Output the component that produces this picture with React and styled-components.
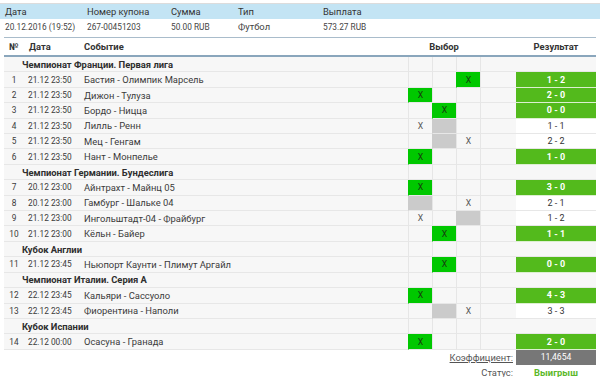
import React from 'react';
import styled, { createGlobalStyle } from 'styled-components';

const GlobalStyle = createGlobalStyle`
  body {
    margin: 0;
    background: #fff;
    font-family: Roboto, 'Liberation Sans', sans-serif;
    font-size: 9.4px;
    color: #333;
  }
`;

const Page = styled.div`
  width: 600px;
  padding-top: 3px;
`;

// цифры в исходнике заметно уже кириллицы
const Num = styled.span`
  font-size: 8.3px;
`;

// верхняя сводка по купону
const Summary = styled.div`
  display: grid;
  grid-template-columns: 82px 84px 67px 85px 1fr;
  padding-left: 5px;
  height: ${(p) => (p.$head ? '15px' : '16px')};
  line-height: ${(p) => (p.$head ? '15px' : '16px')};
  align-items: baseline;
  background: ${(p) => (p.$head ? '#c3e4f4' : '#fff')};
  border-top: ${(p) => (p.$head ? '1px solid #dcdcdc' : 'none')};
  color: ${(p) => (p.$head ? '#333' : '#444')};
  white-space: nowrap;
`;

const Details = styled.div`
  margin: 2px 4px 0;
  border-top: 1px solid #a9bccb;
`;

const COLS = '20px 56px 328px 24px 24px 24px 36px 80px';

const HeadRow = styled.div`
  display: grid;
  grid-template-columns: ${COLS};
  height: 17px;
  align-items: center;
  font-weight: 700;
  color: #333;
  border-bottom: 2px solid #8aa6bc;
`;

const HeadCell = styled.div`
  padding-left: ${(p) => p.$pad || 0}px;
  text-align: ${(p) => (p.$center ? 'center' : 'left')};
  grid-column: ${(p) => p.$span || 'auto'};
`;

const Row = styled.div`
  display: grid;
  grid-template-columns: ${COLS};
  height: 15.42px;
  background: #f7f7f7;
  white-space: nowrap;
`;

const Cell = styled.div`
  display: flex;
  align-items: center;
  justify-content: ${(p) => (p.$center ? 'center' : 'flex-start')};
  padding-left: ${(p) => p.$pad || 0}px;
  border-bottom: 1px solid #e7e7e7;
  color: #3a3a3a;
  font-size: ${(p) => (p.$num ? '8.3px' : 'inherit')};
`;

const LeagueCell = styled(Cell)`
  grid-column: 1 / 4;
  padding-left: 18px;
  font-weight: 700;
  color: #2e2e2e;
`;

const PICK_BG = { win: '#00c800', miss: '#cbcbcb', none: 'transparent' };

const Pick = styled(Cell)`
  justify-content: center;
  border-left: 1px solid ${(p) => (p.$kind === 'win' ? '#00c800' : p.$kind === 'miss' ? '#cbcbcb' : '#e6e6e6')};
  background: ${(p) => PICK_BG[p.$kind]};
  color: ${(p) => (p.$kind === 'win' ? '#183510' : '#555')};
  font-size: 8.6px;
`;

const Spacer = styled(Cell)`
  border-left: 1px solid #e6e6e6;
`;

const Result = styled(Cell)`
  justify-content: center;
  background: ${(p) => (p.$won ? '#53ba1c' : '#fff')};
  color: ${(p) => (p.$won ? '#fff' : '#333')};
  font-weight: ${(p) => (p.$won ? 700 : 400)};
  font-size: 9px;
  border-bottom-color: ${(p) => (p.$won ? '#dcefd0' : '#e7e7e7')};
`;

const Footer = styled.div`
  display: grid;
  grid-template-columns: 1fr 80px;
  height: 15px;
  align-items: center;
`;

const FootLabel = styled.span`
  justify-self: end;
  padding-right: 3px;
  text-decoration: underline;
  color: #555;
`;

const FootValue = styled.div`
  height: 100%;
  display: flex;
  align-items: center;
  justify-content: center;
  background: ${(p) => (p.$dark ? '#777' : 'transparent')};
  color: ${(p) => (p.$dark ? '#fff' : '#5cb82a')};
  font-weight: ${(p) => (p.$dark ? 400 : 700)};
  font-size: ${(p) => (p.$dark ? '8.6px' : 'inherit')};
`;

const leagues = [
  {
    name: 'Чемпионат Франции. Первая лига',
    games: [
      [1, '21.12 23:50', 'Бастия - Олимпик Марсель', ['none', 'none', 'win'], '1 - 2', true],
      [2, '21.12 23:50', 'Дижон - Тулуза', ['win', 'none', 'none'], '2 - 0', true],
      [3, '21.12 23:50', 'Бордо - Ницца', ['none', 'win', 'none'], '0 - 0', true],
      [4, '21.12 23:50', 'Лилль - Ренн', ['pick', 'miss', 'none'], '1 - 1', false],
      [5, '21.12 23:50', 'Мец - Генгам', ['none', 'miss', 'pick'], '2 - 2', false],
      [6, '21.12 23:50', 'Нант - Монпелье', ['win', 'none', 'none'], '1 - 0', true],
    ],
  },
  {
    name: 'Чемпионат Германии. Бундеслига',
    games: [
      [7, '20.12 23:00', 'Айнтрахт - Майнц 05', ['win', 'none', 'none'], '3 - 0', true],
      [8, '20.12 23:00', 'Гамбург - Шальке 04', ['miss', 'none', 'pick'], '2 - 1', false],
      [9, '21.12 23:00', 'Ингольштадт-04 - Фрайбург', ['pick', 'none', 'miss'], '1 - 2', false],
      [10, '21.12 23:00', 'Кёльн - Байер', ['none', 'win', 'none'], '1 - 1', true],
    ],
  },
  {
    name: 'Кубок Англии',
    games: [[11, '21.12 23:45', 'Ньюпорт Каунти - Плимут Аргайл', ['none', 'win', 'none'], '0 - 0', true]],
  },
  {
    name: 'Чемпионат Италии. Серия А',
    games: [
      [12, '22.12 23:45', 'Кальяри - Сассуоло', ['win', 'none', 'none'], '4 - 3', true],
      [13, '22.12 23:45', 'Фиорентина - Наполи', ['none', 'miss', 'pick'], '3 - 3', false],
    ],
  },
  {
    name: 'Кубок Испании',
    games: [[14, '22.12 00:00', 'Осасуна - Гранада', ['win', 'none', 'none'], '2 - 0', true]],
  },
];

function EmptyPicks() {
  return (
    <>
      <Pick $kind="none" />
      <Pick $kind="none" />
      <Pick $kind="none" />
      <Spacer />
      <Cell />
    </>
  );
}

export default function App() {
  return (
    <Page>
      <GlobalStyle />
      <Summary $head>
        <span>Дата</span>
        <span>Номер купона</span>
        <span>Сумма</span>
        <span>Тип</span>
        <span>Выплата</span>
      </Summary>
      <Summary>
        <Num>20.12.2016 (19:52)</Num>
        <Num>267-00451203</Num>
        <Num>50.00 RUB</Num>
        <span>Футбол</span>
        <Num>573.27 RUB</Num>
      </Summary>

      <Details>
        <HeadRow>
          <HeadCell $pad={5}>№</HeadCell>
          <HeadCell $pad={5}>Дата</HeadCell>
          <HeadCell $pad={4}>Событие</HeadCell>
          <HeadCell $center $span="4 / 7">Выбор</HeadCell>
          <HeadCell />
          <HeadCell $center>Результат</HeadCell>
        </HeadRow>

        {leagues.map((lg) => (
          <React.Fragment key={lg.name}>
            <Row>
              <LeagueCell>{lg.name}</LeagueCell>
              <EmptyPicks />
            </Row>
            {lg.games.map(([n, date, event, picks, score, won]) => (
              <Row key={n}>
                <Cell $center $num>{n}</Cell>
                <Cell $pad={4} $num>{date}</Cell>
                <Cell $pad={4}>{event}</Cell>
                {picks.map((p, i) => (
                  <Pick key={i} $kind={p === 'pick' ? 'none' : p}>
                    {p === 'win' || p === 'pick' ? 'X' : ''}
                  </Pick>
                ))}
                <Spacer />
                <Result $won={won}>{score}</Result>
              </Row>
            ))}
          </React.Fragment>
        ))}

        <Footer>
          <FootLabel>Коэффициент:</FootLabel>
          <FootValue $dark>11,4654</FootValue>
        </Footer>
        <Footer>
          <FootLabel>Статус:</FootLabel>
          <FootValue>Выигрыш</FootValue>
        </Footer>
      </Details>
    </Page>
  );
}
